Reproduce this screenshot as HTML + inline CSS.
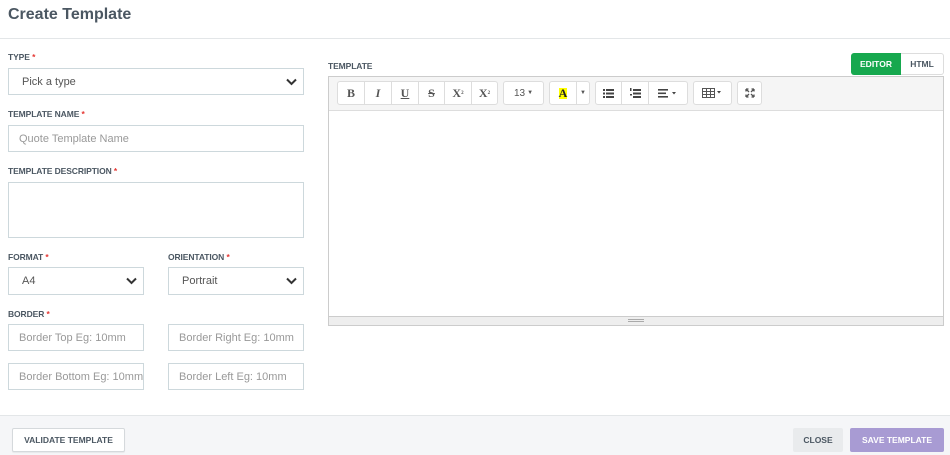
<!DOCTYPE html>
<html><head><style>
*{box-sizing:border-box;margin:0;padding:0}
body{width:950px;height:455px;background:#fff;font-family:"Liberation Sans",sans-serif;position:relative;overflow:hidden;color:#333}
.a{position:absolute}
.t{left:8px;top:6px;font-size:16px;font-weight:bold;color:#4b5762}
.hr{left:0;top:38px;width:950px;height:1px;background:#e3e6e8}
.lbl{position:absolute;font-size:8.5px;font-weight:bold;color:#4b5762;letter-spacing:-.1px}
.lbl i{color:#e53935;font-style:normal}
.inp{position:absolute;border:1px solid #cdd8dc;background:#fff;font-size:11px;color:#999;padding-left:10px;padding-right:3px;display:flex;align-items:center;white-space:nowrap;overflow:hidden}
.sel{color:#555;padding-left:13px}
.chev{position:absolute;right:6px;top:50%;margin-top:-4px}
.foot{left:0;top:415px;width:950px;height:40px;background:#f5f6f8;border-top:1px solid #e3e6e8}
.btn{position:absolute;font-size:8.5px;font-weight:bold;display:flex;align-items:center;justify-content:center;border-radius:2px}
.ed{left:328px;top:76px;width:616px;height:250px;border:1px solid #ccc;background:#fff}
.tb{position:absolute;left:0;top:0;width:614px;height:34px;background:#f5f5f5;border-bottom:1px solid #ddd}
.g{position:absolute;top:4px;height:24px;background:#fff;border:1px solid #ddd;border-radius:3px;display:flex}
.g span{height:22px;border-right:1px solid #ddd;display:flex;align-items:center;justify-content:center;font-family:"Liberation Serif",serif;font-weight:bold;font-size:12px;color:#555}
.g span:last-child{border-right:none}
</style></head><body>
<div class="a t">Create Template</div>
<div class="a hr"></div>

<div class="lbl" style="left:8px;top:52px">TYPE <i>*</i></div>
<div class="inp sel" style="left:8px;top:68px;width:296px;height:27px">Pick a type<svg class="chev" width="11" height="8" viewBox="0 0 11 8"><path d="M1 1.5l4.5 4.5 4.5-4.5" stroke="#333" stroke-width="2" fill="none"/></svg></div>

<div class="lbl" style="left:8px;top:109px">TEMPLATE NAME <i>*</i></div>
<div class="inp" style="left:8px;top:125px;width:296px;height:27px">Quote Template Name</div>

<div class="lbl" style="left:8px;top:166px">TEMPLATE DESCRIPTION <i>*</i></div>
<div class="inp" style="left:8px;top:182px;width:296px;height:56px"></div>

<div class="lbl" style="left:8px;top:252px">FORMAT <i>*</i></div>
<div class="inp sel" style="left:8px;top:267px;width:136px;height:28px">A4<svg class="chev" width="11" height="8" viewBox="0 0 11 8"><path d="M1 1.5l4.5 4.5 4.5-4.5" stroke="#333" stroke-width="2" fill="none"/></svg></div>
<div class="lbl" style="left:168px;top:252px">ORIENTATION <i>*</i></div>
<div class="inp sel" style="left:168px;top:267px;width:136px;height:28px">Portrait<svg class="chev" width="11" height="8" viewBox="0 0 11 8"><path d="M1 1.5l4.5 4.5 4.5-4.5" stroke="#333" stroke-width="2" fill="none"/></svg></div>

<div class="lbl" style="left:8px;top:309px">BORDER <i>*</i></div>
<div class="inp" style="left:8px;top:324px;width:136px;height:27px">Border Top Eg: 10mm</div>
<div class="inp" style="left:168px;top:324px;width:136px;height:27px">Border Right Eg: 10mm</div>
<div class="inp" style="left:8px;top:363px;width:136px;height:27px">Border Bottom Eg: 10mm</div>
<div class="inp" style="left:168px;top:363px;width:136px;height:27px">Border Left Eg: 10mm</div>

<div class="lbl" style="left:328px;top:61px">TEMPLATE</div>
<div class="btn" style="left:851px;top:53px;width:50px;height:22px;background:#16a84e;color:#fff;border-radius:3px 0 0 3px">EDITOR</div>
<div class="btn" style="left:901px;top:53px;width:43px;height:22px;background:#fff;color:#4b5762;border:1px solid #ddd;border-left:none;border-radius:0 3px 3px 0">HTML</div>

<div class="a ed">
<div class="tb">
<div class="g" style="left:8px;width:161px"><span style="width:27px">B</span><span style="width:27px;font-style:italic">I</span><span style="width:27px;text-decoration:underline">U</span><span style="width:26px;text-decoration:line-through">S</span><span style="width:27px">X<sup style="font-size:5px">2</sup></span><span style="width:25px">X<sub style="font-size:5px">2</sub></span></div>
<div class="g" style="left:174px;width:41px"><span style="width:39px;font-family:'Liberation Sans';font-weight:normal;font-size:10px">13 <small style="font-size:6px;margin-left:2px">▼</small></span></div>
<div class="g" style="left:220px;width:41px"><span style="width:27px"><b style="background:#ff0;font-size:12px;color:#222;line-height:11px">A</b></span><span style="width:12px;font-size:6px;font-family:'Liberation Sans'">▼</span></div>
<div class="g" style="left:266px;width:93px">
<span style="width:26px"><svg width="11" height="9"><g fill="#444"><rect x="0" y="0" width="2" height="2"/><rect x="3" y="0" width="8" height="2"/><rect x="0" y="3.5" width="2" height="2"/><rect x="3" y="3.5" width="8" height="2"/><rect x="0" y="7" width="2" height="2"/><rect x="3" y="7" width="8" height="2"/></g></svg></span>
<span style="width:27px"><svg width="11" height="10"><g fill="#444"><rect x="3" y="1" width="8" height="2"/><rect x="3" y="4.5" width="8" height="2"/><rect x="3" y="8" width="8" height="2"/><rect x="0" y="0" width="1.5" height="3"/><rect x="0" y="6" width="2" height="1.5"/></g></svg></span>
<span style="width:38px"><svg width="20" height="9"><g fill="#444"><rect x="0" y="0" width="10" height="1.6"/><rect x="0" y="3.5" width="8" height="1.6"/><rect x="0" y="7" width="10" height="1.6"/><path d="M14 3h4l-2 2.5z"/></g></svg></span></div>
<div class="g" style="left:364px;width:39px"><span style="width:37px"><svg width="21" height="10"><g fill="none" stroke="#555" stroke-width="1"><rect x=".5" y=".5" width="12" height="9"/><path d="M.5 3.5h12M.5 6.5h12M4.5.5v9M8.5.5v9"/></g><path d="M15 3h4l-2 2.5z" fill="#444"/></svg></span></div>
<div class="g" style="left:408px;width:25px"><span style="width:23px"><svg width="10" height="10" fill="none" stroke="#555" stroke-width="1.3"><path d="M1 1l3 3M9 1L6 4M1 9l3-3M9 9L6 6M1 1h2.5M1 1v2.5M9 1H6.5M9 1v2.5M1 9h2.5M1 9V6.5M9 9H6.5M9 9V6.5"/></svg></span></div>
</div>
<div class="a" style="left:0;top:239px;width:614px;height:9px;background:#eee;border-top:1px solid #ccc"><div class="a" style="left:299px;top:2px;width:16px;height:3px;border-top:1px solid #aaa;border-bottom:1px solid #aaa"></div></div>
</div>

<div class="a foot"></div>
<div class="btn" style="left:12px;top:428px;width:113px;height:24px;background:#fff;border:1px solid #d5d9dc;color:#4b5762;box-shadow:0 1px 1px rgba(0,0,0,.06)">VALIDATE TEMPLATE</div>
<div class="btn" style="left:793px;top:428px;width:50px;height:24px;background:#e9ebed;color:#4b5762">CLOSE</div>
<div class="btn" style="left:850px;top:428px;width:94px;height:24px;background:#a89bd3;color:#fff">SAVE TEMPLATE</div>
</body></html>
